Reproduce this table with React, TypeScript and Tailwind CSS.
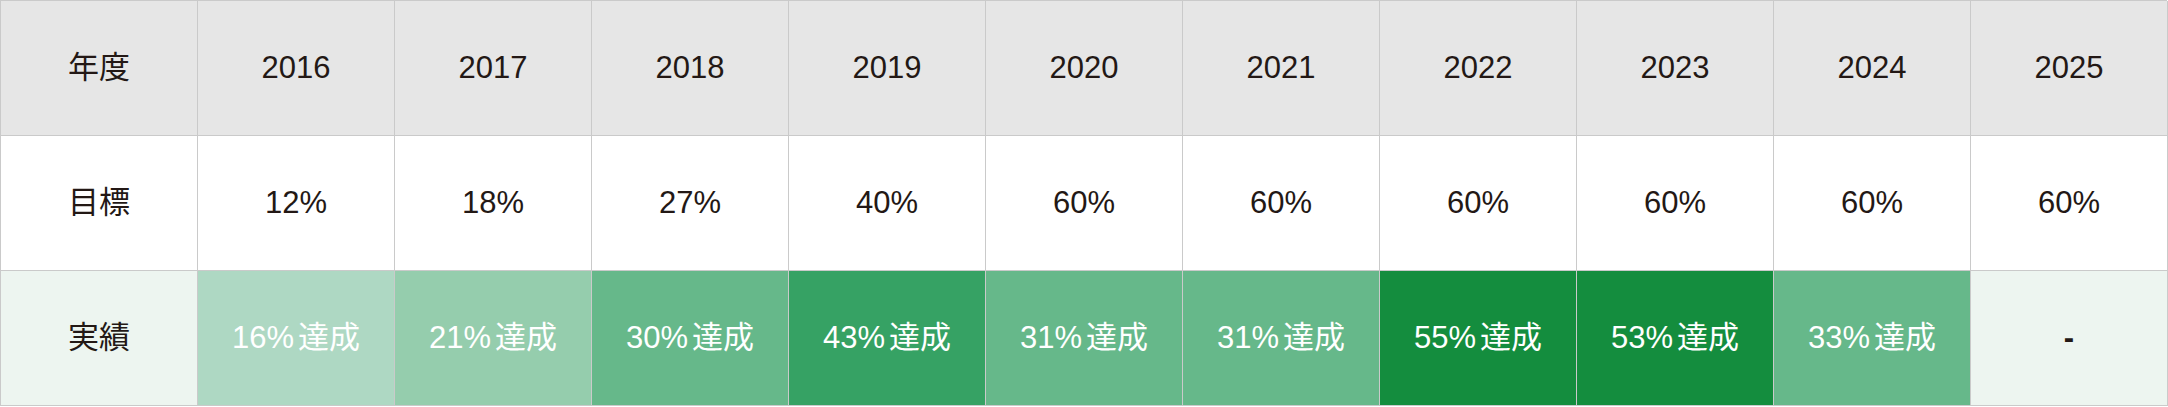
const years = ["2016", "2017", "2018", "2019", "2020", "2021", "2022", "2023", "2024", "2025"];
const targets = ["12%", "18%", "27%", "40%", "60%", "60%", "60%", "60%", "60%", "60%"];

// 実績 cells: value + background shade
const results: { v: string; bg: string }[] = [
  { v: "16%", bg: "bg-[#aed8c3]" },
  { v: "21%", bg: "bg-[#95cdad]" },
  { v: "30%", bg: "bg-[#66b88a]" },
  { v: "43%", bg: "bg-[#36a264]" },
  { v: "31%", bg: "bg-[#66b88a]" },
  { v: "31%", bg: "bg-[#66b88a]" },
  { v: "55%", bg: "bg-[#148d3e]" },
  { v: "53%", bg: "bg-[#148d3e]" },
  { v: "33%", bg: "bg-[#66b88a]" },
];

const cell =
  "flex h-[135px] items-center justify-center border-r border-b border-[#cacaca]";

export default function App() {
  return (
    <div
      className="w-[2168px] bg-white text-[#231815] text-[31px]"
      style={{ fontFamily: '"Liberation Sans", "Noto Sans CJK JP", sans-serif' }}
    >
      <div className="grid w-[2167px] grid-cols-[repeat(11,197px)] border-t border-l border-[#cacaca]">
        <div className={`${cell} bg-[#e6e6e6]`}>年度</div>
        {years.map((y) => (
          <div key={y} className={`${cell} bg-[#e6e6e6]`}>
            {y}
          </div>
        ))}

        <div className={`${cell} bg-white`}>目標</div>
        {targets.map((t, i) => (
          <div key={i} className={`${cell} bg-white`}>
            {t}
          </div>
        ))}

        <div className={`${cell} bg-[#edf5f0]`}>実績</div>
        {results.map((r, i) => (
          <div key={i} className={`${cell} ${r.bg} text-white`}>
            <span>{r.v}</span>
            <span className="ml-[4px]">達成</span>
          </div>
        ))}
        <div className={`${cell} bg-[#edf5f0] font-bold`}>-</div>
      </div>
    </div>
  );
}
